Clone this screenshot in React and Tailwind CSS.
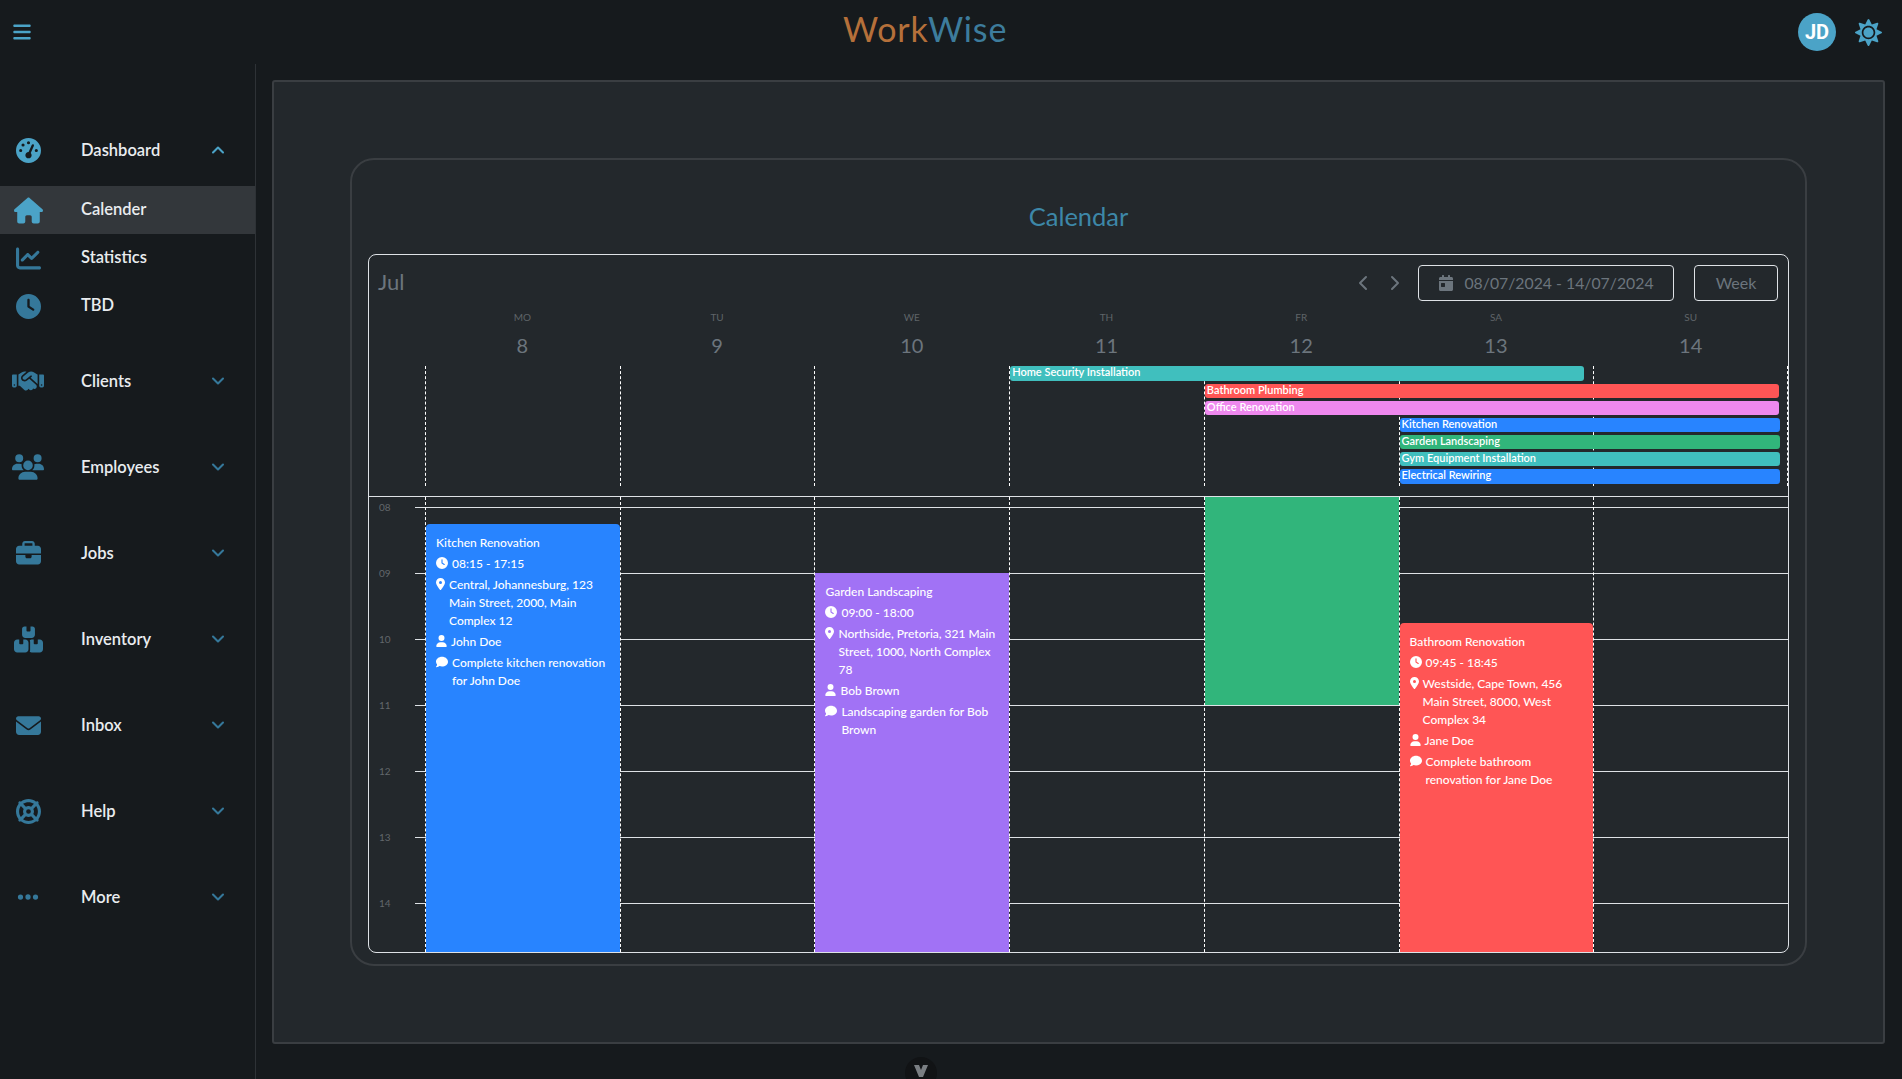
import { ChevronDown, ChevronUp, ChevronLeft, ChevronRight } from 'lucide-react';
import { FaSun, FaCalendarDay } from 'react-icons/fa';
import {
  FaBars, FaHouse, FaChartLine, FaClock, FaBriefcase, FaEnvelope, FaLifeRing, FaEllipsis,
  FaLocationDot, FaUser, FaComment, FaUsers, FaGaugeHigh, FaHandshake, FaBoxesStacked,
} from 'react-icons/fa6';

const dim = 'text-[#35789a]';
const bright = 'text-[#4ba3c7]';

const subItems = [
  { label: 'Calender', icon: FaHouse, size: 29, active: true },
  { label: 'Statistics', icon: FaChartLine, size: 25 },
  { label: 'TBD', icon: FaClock, size: 25 },
];

const navItems = [
  { label: 'Clients', icon: FaHandshake, size: 32 },
  { label: 'Employees', icon: FaUsers, size: 32 },
  { label: 'Jobs', icon: FaBriefcase, size: 25 },
  { label: 'Inventory', icon: FaBoxesStacked, size: 29 },
  { label: 'Inbox', icon: FaEnvelope, size: 25 },
  { label: 'Help', icon: FaLifeRing, size: 25 },
  { label: 'More', icon: FaEllipsis, size: 24 },
];

const days = [
  ['MO', 8], ['TU', 9], ['WE', 10], ['TH', 11], ['FR', 12], ['SA', 13], ['SU', 14],
];

const hours = ['08', '09', '10', '11', '12', '13', '14'];

const allDay = [
  { title: 'Home Security Installation', cls: 'col-start-4 col-span-3 mr-[9px] h-[15px] bg-[#40bfbe]' },
  { title: 'Bathroom Plumbing', cls: 'col-start-5 col-span-3 mr-[9px] h-[14px] bg-[#ff5555]' },
  { title: 'Office Renovation', cls: 'col-start-5 col-span-3 mr-[9px] h-[14px] bg-[#ee88ee]' },
  { title: 'Kitchen Renovation', cls: 'col-start-6 col-span-2 mr-2 h-[14px] bg-[#2884ff]' },
  { title: 'Garden Landscaping', cls: 'col-start-6 col-span-2 mr-2 h-[14px] bg-[#31b57b]' },
  { title: 'Gym Equipment Installation', cls: 'col-start-6 col-span-2 mr-2 h-[14px] bg-[#40bfbe]' },
  { title: 'Electrical Rewiring', cls: 'col-start-6 col-span-2 mr-2 h-[15px] bg-[#2884ff]' },
];

function NavRow({ item, open }) {
  const Icon = item.icon;
  const Chevron = open ? ChevronUp : ChevronDown;
  return (
    <div className="flex items-center h-12">
      <span className={`w-14 flex justify-center ${open ? bright : dim}`}>
        <Icon size={item.size} />
      </span>
      <span className="ml-[25px] text-[16.5px] font-semibold text-[#e9ecef]">{item.label}</span>
      <Chevron size={20} strokeWidth={2.5} className={`ml-auto mr-[27px] ${open ? bright : dim}`} />
    </div>
  );
}

function Sidebar() {
  return (
    <aside className="w-64 shrink-0 border-r border-[#2e3236] pt-[62px]">
      <NavRow item={{ label: 'Dashboard', icon: FaGaugeHigh, size: 25 }} open />
      <div className="mt-3 mb-[27px]">
        {subItems.map((s) => {
          const Icon = s.icon;
          return (
            <div key={s.label} className={`flex items-center h-12 ${s.active ? 'bg-[#33373b]' : ''}`}>
              <span className={`w-14 flex justify-center ${s.active ? bright : dim}`}>
                <Icon size={s.size} />
              </span>
              <span className="ml-[25px] -mt-[2px] text-[16.5px] font-semibold text-[#e9ecef]">{s.label}</span>
            </div>
          );
        })}
      </div>
      <div className="flex flex-col gap-[38px]">
        {navItems.map((n) => <NavRow key={n.label} item={n} />)}
      </div>
    </aside>
  );
}

function EventLine({ icon: Icon, w, children }) {
  return (
    <div className="flex mt-[3px]">
      <Icon className="shrink-0 h-3 mt-[2px] mr-1" style={{ width: w }} />
      <span>{children}</span>
    </div>
  );
}

function EventCard({ ev }) {
  return (
    <div className={`absolute left-0 right-0 bottom-0 overflow-hidden pl-[10px] pr-2 pt-[10px] text-xs leading-[18px] font-medium text-white ${ev.cls}`}>
      <div>{ev.title}</div>
      <EventLine icon={FaClock} w={12}>{ev.time}</EventLine>
      <EventLine icon={FaLocationDot} w={9}>{ev.place}</EventLine>
      <EventLine icon={FaUser} w={11}>{ev.person}</EventLine>
      <EventLine icon={FaComment} w={12}>{ev.note}</EventLine>
    </div>
  );
}

function AllDayRow() {
  return (
    <div className="relative ml-14 h-[120px]">
      <div className="absolute inset-0 grid grid-cols-7">
        {days.map(([d], i) => (
          <div key={d} className={`border-l border-dashed border-white ${i === 6 ? 'border-r' : ''}`} />
        ))}
      </div>
      <div className="relative grid grid-cols-7 gap-y-[3px]">
        {allDay.map((b) => (
          <div key={b.title} className={`ml-px pl-[2px] rounded-[3px] text-[11px] leading-[12px] font-semibold text-white ${b.cls}`}>
            {b.title}
          </div>
        ))}
      </div>
    </div>
  );
}

function TimeGrid() {
  return (
    <div className="relative h-[456px] overflow-hidden rounded-b-lg border-t border-[#dee2e6]">
      <div className="pt-[10px]">
        {hours.map((h) => (
          <div key={h} className="flex h-[66px]">
            <span className="w-[46px] pl-[10px] -mt-[6px] text-[10px] leading-[12px] text-[#62676b]">{h}</span>
            <div className="flex-1 border-t border-[#dee2e6]" />
          </div>
        ))}
      </div>
      <div className="absolute left-14 right-0 inset-y-0 grid grid-cols-7">
        <div className="relative border-l border-dashed border-white">
          <EventCard ev={{
            cls: 'top-[27px] rounded-t-[4px] bg-[#2884ff]',
            title: 'Kitchen Renovation',
            time: '08:15 - 17:15',
            place: 'Central, Johannesburg, 123 Main Street, 2000, Main Complex 12',
            person: 'John Doe',
            note: 'Complete kitchen renovation for John Doe',
          }} />
        </div>
        <div className="border-l border-dashed border-white" />
        <div className="relative border-l border-dashed border-white">
          <EventCard ev={{
            cls: 'top-[76px] bg-[#a172f5]',
            title: 'Garden Landscaping',
            time: '09:00 - 18:00',
            place: 'Northside, Pretoria, 321 Main Street, 1000, North Complex 78',
            person: 'Bob Brown',
            note: 'Landscaping garden for Bob Brown',
          }} />
        </div>
        <div className="border-l border-dashed border-white" />
        <div className="relative border-l border-dashed border-white">
          <div className="absolute left-0 right-0 top-0 h-[208px] bg-[#31b57b]" />
        </div>
        <div className="relative border-l border-dashed border-white">
          <EventCard ev={{
            cls: 'top-[126px] rounded-t-[4px] bg-[#ff5555]',
            title: 'Bathroom Renovation',
            time: '09:45 - 18:45',
            place: 'Westside, Cape Town, 456 Main Street, 8000, West Complex 34',
            person: 'Jane Doe',
            note: 'Complete bathroom renovation for Jane Doe',
          }} />
        </div>
        <div className="border-l border-dashed border-white" />
      </div>
    </div>
  );
}

function Calendar() {
  return (
    <div className="rounded-lg border border-[#dee2e6]">
      <div className="flex items-center pt-[10px] pl-[9px] pr-[10px]">
        <span className="-mt-[2px] text-[22px] leading-9 text-[#6c757d]">Jul</span>
        <div className="ml-auto flex items-center text-[#6c757d]">
          <ChevronLeft size={24} />
          <ChevronRight size={24} className="ml-2 mr-[11px]" />
          <div className="flex items-center justify-center gap-[10px] w-64 h-9 rounded border border-[#dee2e6] text-[15.8px]">
            <FaCalendarDay size={16} />
            <span>08/07/2024 - 14/07/2024</span>
          </div>
          <div className="flex items-center justify-center w-[84px] h-9 ml-[20px] rounded border border-[#dee2e6] text-base">Week</div>
        </div>
      </div>
      <div className="ml-14 grid grid-cols-7 pt-[11px] pb-[7px] text-center text-[#6c757d]">
        {days.map(([d, n]) => (
          <div key={d}>
            <div className="-mt-px mb-2 text-[10px] leading-[12px] text-[#5f6468]">{d}</div>
            <div className="text-xl leading-7">{n}</div>
          </div>
        ))}
      </div>
      <AllDayRow />
      <div className="h-[10px]" />
      <TimeGrid />
    </div>
  );
}

export default function App() {
  return (
    <div className="relative flex flex-col h-screen overflow-hidden bg-[#161a1d] font-['Lato',sans-serif]">
      <header className="flex items-center h-16 shrink-0">
        <FaBars className="ml-[13px] w-[18px] h-5 text-[#4ba3c7]" />
        <div className="ml-[812px] -mt-[6px] text-[34px] leading-10 tracking-wide">
          <span className="text-[#b5703a]">Work</span>
          <span className="text-[#3d7c9c]">Wise</span>
        </div>
        <div className="ml-auto mr-5 flex items-center gap-[19px]">
          <div className="flex items-center justify-center w-[38px] h-[38px] rounded-full bg-[#4ba3c7] font-['Roboto',sans-serif] text-xl font-bold text-white">JD</div>
          <FaSun size={27} className="text-[#4ba3c7]" />
        </div>
      </header>
      <div className="flex flex-1 min-h-0">
        <Sidebar />
        <main className="flex-1 pl-4 pr-[17px] pt-4">
          <div className="rounded-[3px] border-2 border-[#3a3e42] bg-[#23282c] p-[76px]">
            <div className="rounded-[24px] border-2 border-[#3a3e42] px-4 pt-[42px] pb-[11px]">
              <h1 className="mb-[22px] -mt-px pb-px text-center text-[25.5px] leading-[30px] text-[#3d87a8]">Calendar</h1>
              <Calendar />
            </div>
          </div>
        </main>
      </div>
      <div className="absolute left-[905px] top-[1057px] flex justify-center w-8 h-8 pt-2 rounded-full bg-[#111315]">
        <svg width="14" height="12" viewBox="0 0 14 12"><path d="M0 0h5l2 5 2-5h5l-5 12h-4z" fill="#7a7e82" /></svg>
      </div>
    </div>
  );
}
